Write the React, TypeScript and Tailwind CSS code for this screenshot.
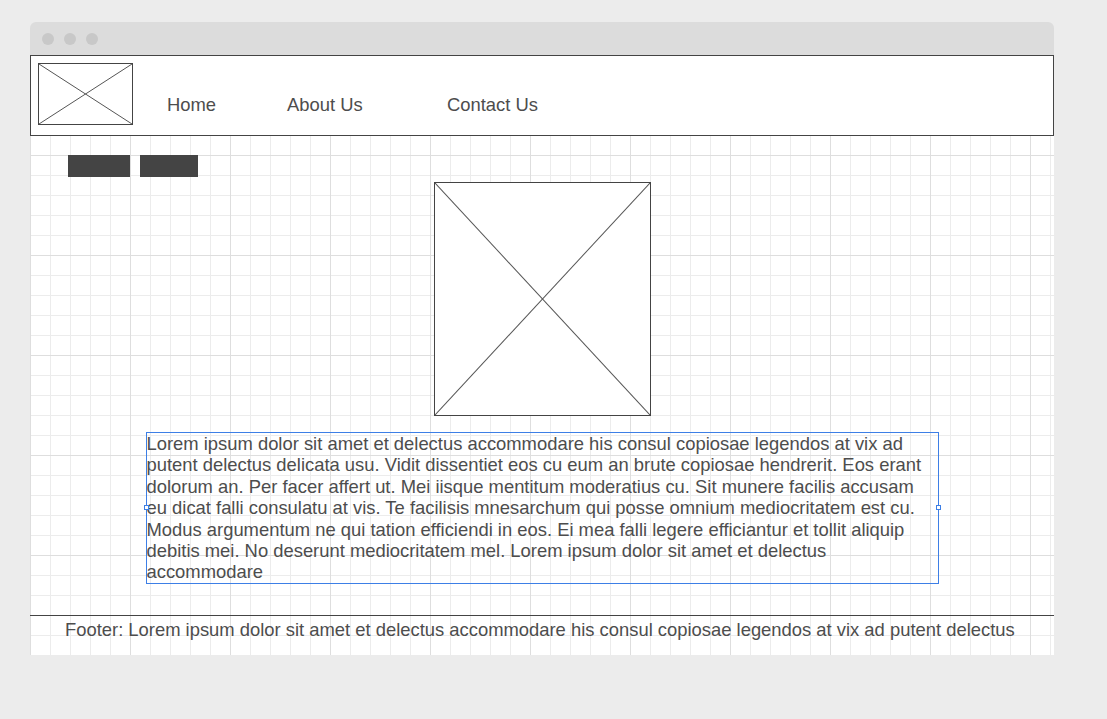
import React from 'react';

// Wireframe mock-up: browser window with header, buttons, image placeholder, text block and footer

const LOREM =
  'Lorem ipsum dolor sit amet et delectus accommodare his consul copiosae legendos at vix ad putent delectus delicata usu. Vidit dissentiet eos cu eum an brute copiosae hendrerit. Eos erant dolorum an. Per facer affert ut. Mei iisque mentitum moderatius cu. Sit munere facilis accusam eu dicat falli consulatu at vis. Te facilisis mnesarchum qui posse omnium mediocritatem est cu. Modus argumentum ne qui tation efficiendi in eos. Ei mea falli legere efficiantur et tollit aliquip debitis mei. No deserunt mediocritatem mel. Lorem ipsum dolor sit amet et delectus accommodare';

function Placeholder({ className }: { className: string }) {
  return (
    <div className={`relative border border-[#444] bg-white ${className}`}>
      <svg className="absolute inset-0 h-full w-full" preserveAspectRatio="none" viewBox="0 0 100 100">
        <line x1="0" y1="0" x2="100" y2="100" stroke="#555" strokeWidth="1" vectorEffect="non-scaling-stroke" />
        <line x1="100" y1="0" x2="0" y2="100" stroke="#555" strokeWidth="1" vectorEffect="non-scaling-stroke" />
      </svg>
    </div>
  );
}

export default function App() {
  return (
    <div className="min-h-[719px] w-full bg-[#ececec] pt-[22px] pl-[30px] font-['Liberation_Sans',Arial,sans-serif] text-[18.4px] leading-[21.7px] text-[#4d4d4d]">
      <div className="w-[1024px]">
        {/* barra de título */}
        <div className="flex h-[33px] items-center gap-[10px] rounded-t-[6px] bg-[#dcdcdc] pl-[12px]">
          <span className="h-[12px] w-[12px] rounded-full bg-[#c8c8c8]" />
          <span className="h-[12px] w-[12px] rounded-full bg-[#c8c8c8]" />
          <span className="h-[12px] w-[12px] rounded-full bg-[#c8c8c8]" />
        </div>

        {/* cuerpo con cuadrícula */}
        <div className="bg-white bg-[linear-gradient(to_right,#dedede_1px,transparent_1px),linear-gradient(to_bottom,#dedede_1px,transparent_1px),linear-gradient(to_right,#ececec_1px,transparent_1px),linear-gradient(to_bottom,#ececec_1px,transparent_1px)] bg-[size:100px_100px,100px_100px,20px_20px,20px_20px]">
          {/* Header */}
          <div className="flex h-[81px] border border-[#444] bg-white pl-[7px] pt-[7px]">
            <Placeholder className="h-[62px] w-[95px]" />
            <nav className="ml-[34px] mt-[31px] flex">
              <a className="w-[120px]">Home</a>
              <a className="w-[160px]">About Us</a>
              <a>Contact Us</a>
            </nav>
          </div>

          {/* Botones */}
          <div className="flex gap-[10px] pl-[38px] pt-[19px]">
            <div className="h-[22px] w-[62px] bg-[#444]" />
            <div className="h-[22px] w-[58px] bg-[#444]" />
          </div>

          {/* Imagen */}
          <div className="mt-[5px] flex justify-center">
            <Placeholder className="h-[234px] w-[217px]" />
          </div>

          {/* Texto */}
          <div className="mt-[16px] flex justify-center">
            <div className="relative w-[793px] border border-[#3d7fe6] leading-[21.4px]">
              <p>{LOREM}</p>
              <span className="absolute -left-[3px] top-[72px] h-[5px] w-[5px] border border-[#3d7fe6] bg-white" />
              <span className="absolute -right-[3px] top-[72px] h-[5px] w-[5px] border border-[#3d7fe6] bg-white" />
            </div>
          </div>

          {/* Footer */}
          <div className="mt-[31px] h-[40px] border-t border-[#444] pl-[35px] pt-[3px]">
            Footer: Lorem ipsum dolor sit amet et delectus accommodare his consul copiosae legendos at vix ad putent delectus
          </div>
        </div>
      </div>
    </div>
  );
}
